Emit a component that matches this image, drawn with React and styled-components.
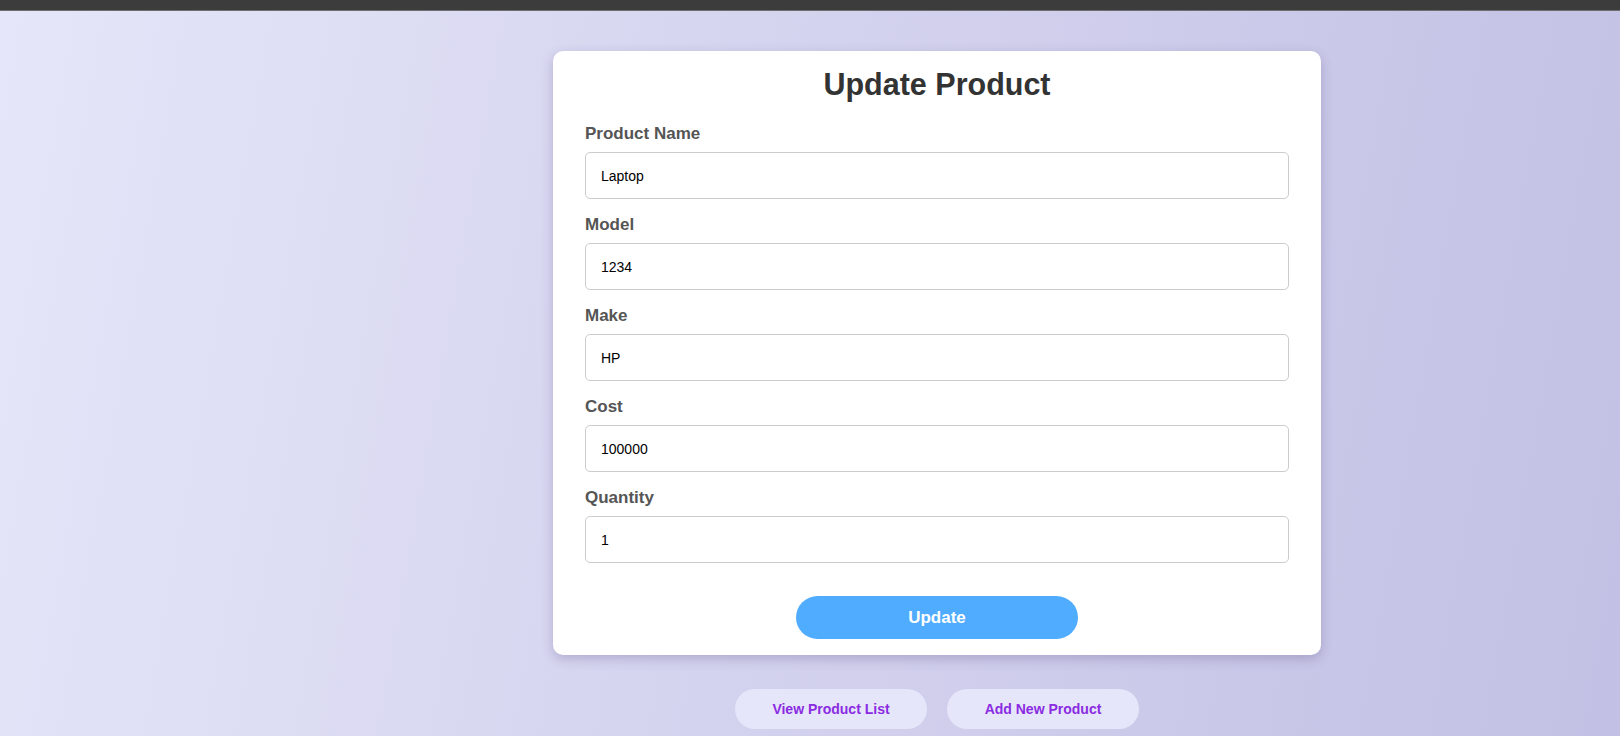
import styled, { createGlobalStyle } from 'styled-components';

const GlobalStyle = createGlobalStyle`
  * {
    box-sizing: border-box;
  }

  body {
    margin: 0;
    font-family: 'Liberation Sans', Arial, sans-serif;
  }
`;

const Page = styled.div`
  min-height: 100vh;
  display: flex;
  flex-direction: column;
  background: linear-gradient(100deg, #e5e6f9 0%, #d5d4ef 45%, #c2c0e4 100%);
`;

const TopBar = styled.div`
  height: 11px;
  background-color: #3c3c3c;
  border-bottom: 1px solid #6e6e6e;
`;

const Main = styled.main`
  display: flex;
  flex-direction: column;
  align-items: center;
  padding: 40px 0 0 254px;
`;

const Card = styled.form`
  width: 768px;
  padding: 15px 32px 16px;
  background-color: #fff;
  border-radius: 10px;
  box-shadow: 0 4px 12px rgba(60, 50, 110, 0.25);
  display: flex;
  flex-direction: column;
`;

const Title = styled.h1`
  margin: 0 0 21px;
  font-size: 30.5px;
  line-height: 37px;
  font-weight: 700;
  text-align: center;
  color: #333;
`;

const Fields = styled.div`
  display: flex;
  flex-direction: column;
  gap: 16px;
`;

const Field = styled.div`
  display: flex;
  flex-direction: column;
  gap: 8px;
`;

const Label = styled.label`
  font-size: 17px;
  line-height: 20px;
  font-weight: 700;
  color: #555;
`;

const Input = styled.input`
  height: 47px;
  width: 100%;
  padding: 0 15px;
  border: 1px solid #ccc;
  border-radius: 5px;
  font-family: 'Liberation Sans', Arial, sans-serif;
  font-size: 14px;
  color: #000;
  background: #fff;
  outline: none;
`;

const SubmitButton = styled.button`
  align-self: center;
  margin-top: 33px;
  width: 282px;
  height: 43px;
  border: none;
  border-radius: 22px;
  background-color: #4facfe;
  color: #fff;
  font-family: 'Liberation Sans', Arial, sans-serif;
  font-size: 17px;
  font-weight: 700;
  cursor: pointer;
`;

const Nav = styled.nav`
  display: flex;
  gap: 20px;
  margin-top: 34px;
`;

const NavButton = styled.button`
  width: 192px;
  height: 40px;
  border: none;
  border-radius: 20px;
  background-color: #e6e6fa;
  color: #8a2be2;
  font-family: 'Liberation Sans', Arial, sans-serif;
  font-size: 14px;
  font-weight: 700;
  cursor: pointer;
`;

const fields = [
  { id: 'name', label: 'Product Name', value: 'Laptop' },
  { id: 'model', label: 'Model', value: '1234' },
  { id: 'make', label: 'Make', value: 'HP' },
  { id: 'cost', label: 'Cost', value: '100000' },
  { id: 'quantity', label: 'Quantity', value: '1' },
];

export default function App() {
  return (
    <Page>
      <GlobalStyle />
      <TopBar />
      <Main>
        <Card onSubmit={e => e.preventDefault()}>
          <Title>Update Product</Title>
          <Fields>
            {fields.map(field => (
              <Field key={field.id}>
                <Label htmlFor={field.id}>{field.label}</Label>
                <Input id={field.id} defaultValue={field.value} />
              </Field>
            ))}
          </Fields>
          <SubmitButton type="submit">Update</SubmitButton>
        </Card>
        <Nav>
          <NavButton>View Product List</NavButton>
          <NavButton>Add New Product</NavButton>
        </Nav>
      </Main>
    </Page>
  );
}
